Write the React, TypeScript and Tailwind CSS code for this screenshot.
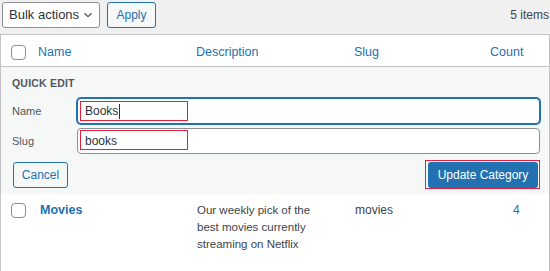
import React from "react";

const Check = () => (
  <div className="w-[15px] h-[15px] rounded-[4px] border border-[#8c8f94] bg-white" />
);

export default function App() {
  return (
    <div
      className="w-[550px] h-[271px] overflow-hidden bg-[#f0f0f1] text-[#3c434a]"
      style={{ fontFamily: '"Liberation Sans", Arial, sans-serif' }}
    >
      {/* top bar */}
      <div className="h-[34px] flex items-start pt-[2px] pl-[2px] pr-[1px]">
        <div className="w-[98px] h-[26px] rounded-[3px] border border-[#8c8f94] bg-white flex items-center pl-[6px] pr-[6px] text-[13px] text-[#2c3338]">
          <span>Bulk actions</span>
          <svg className="ml-auto" width="10" height="10" viewBox="0 0 10 10">
            <path d="M1.5 3.2 L5 6.7 L8.5 3.2" fill="none" stroke="#50575e" strokeWidth="1.3" />
          </svg>
        </div>
        <div className="ml-[7px] w-[49px] h-[26px] rounded-[3px] border border-[#2271b1] bg-[#f6f7f7] text-[#2271b1] text-[12px] flex items-center justify-center">
          Apply
        </div>
        <div className="ml-auto h-[26px] flex items-center text-[12px] text-[#3c434a]">5 items</div>
      </div>

      {/* table */}
      <div className="border-x border-t border-[#c3c4c7] bg-white h-[237px]">
        {/* header */}
        <div className="h-[32px] border-b border-[#c3c4c7] flex items-center pt-[3px] pl-[10px] text-[12.5px] text-[#2271b1]">
          <div className="w-[27px]">
            <Check />
          </div>
          <div className="w-[158px]">Name</div>
          <div className="w-[158px]">Description</div>
          <div className="w-[136px]">Slug</div>
          <div>Count</div>
        </div>

        {/* quick edit */}
        <div className="bg-[#f6f7f7] h-[127px] pl-[11px] pr-[9px] pt-[8px]">
          <div className="h-[14px] leading-[14px] text-[10.5px] font-bold tracking-[0.2px] text-[#50575e] mt-[1px]">
            QUICK EDIT
          </div>
          <div className="mt-[8px] flex items-center">
            <div className="w-[65px] text-[11px] text-[#50575e]">Name</div>
            <div className="relative flex-1 h-[26px] rounded-[4px] border border-[#2271b1] shadow-[0_0_0_1px_#2271b1] bg-white flex items-center pl-[7px] text-[12px] text-[#2c3338]">
              <span>Books</span>
              <span className="w-[1px] h-[15px] bg-[#2c3338] ml-[1px]" />
              <span className="absolute left-[2px] top-[2px] w-[108px] h-[20px] border-[1.5px] border-[#e3213f]" />
            </div>
          </div>
          <div className="mt-[4px] flex items-center">
            <div className="w-[65px] text-[11px] text-[#50575e]">Slug</div>
            <div className="relative flex-1 h-[26px] rounded-[4px] border border-[#8c8f94] bg-white flex items-center pl-[7px] text-[12px] text-[#2c3338]">
              <span>books</span>
              <span className="absolute left-[2px] top-[1px] w-[108px] h-[20px] border-[1.5px] border-[#e3213f]" />
            </div>
          </div>
          <div className="mt-[8px] flex items-center pl-[1px] pr-[2px]">
            <div className="w-[55px] h-[26px] rounded-[3px] border border-[#2271b1] bg-[#f6f7f7] text-[#2271b1] text-[12px] flex items-center justify-center">
              Cancel
            </div>
            <div className="relative ml-auto">
              <div className="w-[110px] h-[26px] rounded-[3px] bg-[#2271b1] text-white text-[12px] flex items-center justify-center">
                Update Category
              </div>
              <span className="absolute left-[-3px] right-[-2px] top-[-2px] bottom-[-1px] border-[1.5px] border-[#e3213f]" />
            </div>
          </div>
        </div>

        {/* row */}
        <div className="flex items-start pl-[10px] pt-[8px]">
          <div className="w-[27px] pt-[1px]">
            <Check />
          </div>
          <div className="w-[158px] pl-[2px] text-[12.5px] leading-[17px] font-bold text-[#2271b1]">Movies</div>
          <div className="w-[158px] pl-[1px]">
            <div className="w-[128px] text-[11.5px] leading-[17px] text-[#3c434a]">
              Our weekly pick of the best movies currently streaming on Netflix
            </div>
          </div>
          <div className="w-[136px] pl-[1px] text-[12px] leading-[17px] text-[#3c434a]">movies</div>
          <div className="pl-[23px] text-[12px] leading-[17px] text-[#2271b1]">4</div>
        </div>
      </div>
    </div>
  );
}
